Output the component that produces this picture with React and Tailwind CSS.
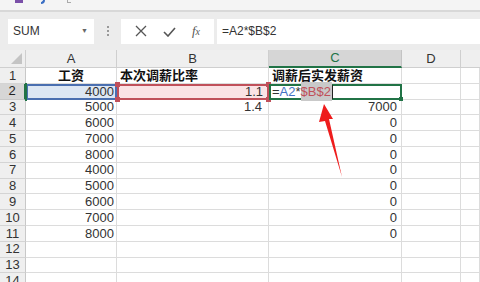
import React from "react";

const colA = [4000, 5000, 6000, 7000, 8000, 4000, 5000, 6000, 7000, 8000];
const colC = ["", 7000, 0, 0, 0, 0, 0, 0, 0, 0];

const cellBase = "border-r border-b border-[#dcdcdc] bg-white overflow-visible whitespace-nowrap";

const Sheet = () => {
  const rows = [];
  for (let r = 1; r <= 14; r++) {
    const sel = r === 2;
    rows.push(
      <div
        key={"h" + r}
        className={
          sel
            ? "bg-[#d6d6d6] border-b border-[#c8c8c8] border-r-2 border-r-[#217346] flex items-center justify-center text-[13px] text-[#222]"
            : "bg-[#efefef] border-b border-[#d4d4d4] border-r border-r-[#c8c8c8] flex items-center justify-center text-[13px] text-[#333]"
        }
      >
        {r}
      </div>
    );
    // column A
    if (r === 1) {
      rows.push(<div key={"a" + r} className={cellBase + " flex items-center justify-center font-bold text-[13px] text-[#111]"}>工资</div>);
    } else if (sel) {
      rows.push(
        <div key={"a" + r} className="relative border-2 border-[#4a6fb0] bg-[#dde7f3] flex items-center justify-end pr-[1px] text-[13px] text-[#333]">
          4000
          <span className="absolute -left-[3px] -top-[3px] w-[2px] h-[18px] bg-[#217346]" />
        </div>
      );
    } else {
      rows.push(
        <div key={"a" + r} className={cellBase + " flex items-center justify-end pr-[2px] text-[13px] text-[#333]"}>
          {colA[r - 2] ?? ""}
        </div>
      );
    }
    // column B
    if (r === 1) {
      rows.push(<div key={"b" + r} className={cellBase + " flex items-center pl-[3px] font-bold text-[13px] text-[#111]"}>本次调薪比率</div>);
    } else if (sel) {
      rows.push(
        <div key={"b" + r} className="relative border-2 border-[#c0505a] bg-[#fae3e5] flex items-center justify-end pr-[4px] text-[13px] text-[#333]">
          1.1
          <span className="absolute -left-[4px] -top-[4px] w-[5px] h-[5px] bg-[#c0505a]" />
          <span className="absolute -right-[4px] -top-[4px] w-[5px] h-[5px] bg-[#c0505a]" />
          <span className="absolute -left-[4px] -bottom-[4px] w-[5px] h-[5px] bg-[#c0505a]" />
          <span className="absolute -right-[4px] -bottom-[4px] w-[5px] h-[5px] bg-[#c0505a]" />
        </div>
      );
    } else {
      rows.push(
        <div key={"b" + r} className={cellBase + " flex items-center justify-end pr-[6px] text-[13px] text-[#333]"}>
          {r === 3 ? "1.4" : ""}
        </div>
      );
    }
    // column C
    if (r === 1) {
      rows.push(<div key={"c" + r} className={cellBase + " flex items-center pl-[3px] font-bold text-[13px] text-[#111]"}>调薪后实发薪资</div>);
    } else if (sel) {
      rows.push(
        <div key={"c" + r} className="relative border-2 border-[#217346] bg-white flex items-center pl-[1px] text-[13px]">
          <span className="text-[#333]">=</span>
          <span className="text-[#4472c4]">A2</span>
          <span className="text-[#333]">*</span>
          <span className="bg-[#c9c9c9] text-[#c0505a] pr-[1px]">$B$2</span>
          <span className="w-[1px] h-[14px] bg-[#222]" />
          <span className="absolute -right-[3px] -bottom-[3px] w-[4px] h-[4px] bg-[#217346]" />
        </div>
      );
    } else {
      rows.push(
        <div key={"c" + r} className={cellBase + " flex items-center justify-end pr-[4px] text-[13px] text-[#333]"}>
          {colC[r - 2] ?? ""}
        </div>
      );
    }
    rows.push(<div key={"d" + r} className={cellBase} />);
    rows.push(<div key={"e" + r} className={cellBase} />);
  }
  return rows;
};

const App = () => {
  return (
    <div className="relative w-[480px] h-[282px] overflow-hidden bg-white font-['Liberation_Sans','Noto_Sans_CJK_SC',sans-serif]">
      {/* quick access bar (cut off) */}
      <div className="h-[10px] bg-[#f4f4f4] relative flex items-start">
        <span className="ml-[15px] w-[8px] h-[3px] bg-[#7a4fa8]" />
        <span className="ml-[18px] w-[4px] h-[4px] border-b-2 border-r-2 border-[#3b6fc4] rounded-br-full" />
        <span className="ml-[22px] w-[4px] h-[3px] border-b border-l border-[#aaa]" />
      </div>
      <div className="h-[2px] bg-[#d8d8d8]" />
      {/* formula bar */}
      <div className="h-[38px] bg-[#ececec] flex items-center pl-[8px]">
        <div className="w-[86px] h-[25px] bg-white flex items-center justify-between pl-[5px] pr-[6px] text-[12px] text-[#333]">
          <span>SUM</span>
          <span className="text-[7px] text-[#666]">▼</span>
        </div>
        <div className="w-[27px] flex flex-col items-center gap-[2px]">
          <span className="w-[2px] h-[2px] bg-[#999]" />
          <span className="w-[2px] h-[2px] bg-[#999]" />
          <span className="w-[2px] h-[2px] bg-[#999]" />
        </div>
        <div className="w-[93px] h-[25px] bg-white flex items-center justify-around px-[6px] text-[#555]">
          <svg width="12" height="12" viewBox="0 0 12 12">
            <path d="M1 1 L11 11 M11 1 L1 11" stroke="#555" strokeWidth="1.3" fill="none" />
          </svg>
          <svg width="13" height="11" viewBox="0 0 13 11">
            <path d="M1 6 L5 10 L12 2" stroke="#555" strokeWidth="1.6" fill="none" />
          </svg>
          <span className="text-[13px] italic font-['Liberation_Serif',serif] text-[#555]">
            f<span className="text-[10px]">x</span>
          </span>
        </div>
        <div className="ml-[3px] flex-1 h-[25px] bg-white flex items-center pl-[5px] text-[12px] text-[#333]">
          =A2*$B$2
        </div>
      </div>
      {/* sheet */}
      <div className="grid grid-cols-[26px_91px_152px_133px_59px_1fr] grid-rows-[18px] auto-rows-[15.8px]">
        <div className="bg-[#efefef] border-r border-b border-[#cfcfcf] relative">
          <span className="absolute right-[3px] bottom-[3px] w-0 h-0 border-l-[11px] border-l-transparent border-b-[11px] border-b-[#c4c4c4]" />
        </div>
        <div className="bg-[#efefef] border-r border-b border-[#cfcfcf] flex items-center justify-center text-[13px] text-[#333]">A</div>
        <div className="bg-[#efefef] border-r border-b border-[#cfcfcf] flex items-center justify-center text-[13px] text-[#333]">B</div>
        <div className="bg-[#d6d6d6] border-r border-[#c4c4c4] border-b-2 border-b-[#217346] flex items-center justify-center text-[13px] text-[#217346]">C</div>
        <div className="bg-[#efefef] border-r border-b border-[#cfcfcf] flex items-center justify-center text-[13px] text-[#333]">D</div>
        <div className="bg-[#efefef] border-b border-[#cfcfcf]" />
        <Sheet />
      </div>
      {/* red arrow annotation */}
      <svg className="absolute left-0 top-0 pointer-events-none" width="480" height="282">
        <polygon points="324,104 333,119 329,119 342,177 325,121 319,122" fill="#ee1c1c" />
      </svg>
    </div>
  );
};

export default App;
